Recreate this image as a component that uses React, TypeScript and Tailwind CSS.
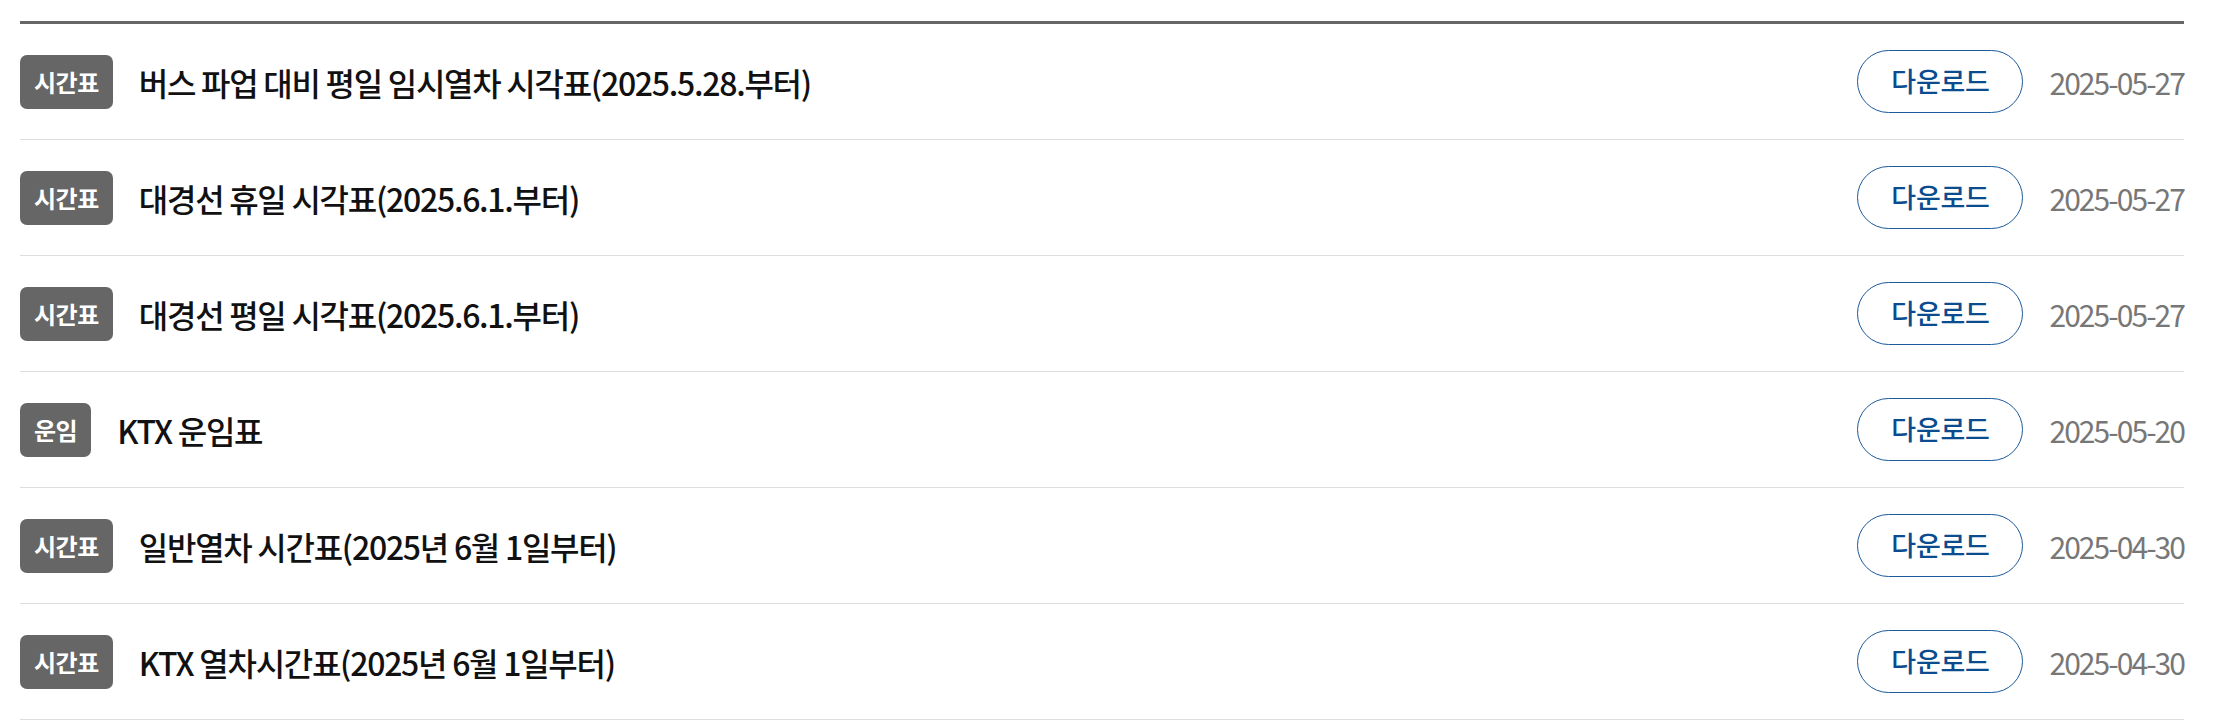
import React from "react";

type Item = { tag: string; title: string; date: string };

const items: Item[] = [
  { tag: "시간표", title: "버스 파업 대비 평일 임시열차 시각표(2025.5.28.부터)", date: "2025-05-27" },
  { tag: "시간표", title: "대경선 휴일 시각표(2025.6.1.부터)", date: "2025-05-27" },
  { tag: "시간표", title: "대경선 평일 시각표(2025.6.1.부터)", date: "2025-05-27" },
  { tag: "운임", title: "KTX 운임표", date: "2025-05-20" },
  { tag: "시간표", title: "일반열차 시간표(2025년 6월 1일부터)", date: "2025-04-30" },
  { tag: "시간표", title: "KTX 열차시간표(2025년 6월 1일부터)", date: "2025-04-30" },
];

export default function App() {
  return (
    <div
      className="w-[2230px] h-[727px] bg-white pt-[21px] pl-[20px]"
      style={{ fontFamily: '"Noto Sans CJK KR", "Noto Sans", sans-serif' }}
    >
      <ul className="w-[2164px] border-t-[3px] border-[#666666]">
        {items.map((it, i) => (
          <li
            key={i}
            className="flex items-center h-[116px] border-b border-[#dddddd]"
          >
            <span className="flex items-center justify-center h-[54px] px-[14px] rounded-[7px] bg-[#666666] text-white text-[24px] font-semibold tracking-[-0.02em] shrink-0">
              {it.tag}
            </span>
            <span className="ml-[26px] flex-1 text-[32px] font-medium text-[#111111] tracking-[-0.04em] leading-none">
              {it.title}
            </span>
            <button className="flex items-center justify-center w-[166px] h-[63px] rounded-full border border-[#1d5a9b] text-[#0b4c8f] text-[27px] font-medium tracking-[-0.01em] shrink-0">
              다운로드
            </button>
            <span className="ml-[26px] text-[30px] text-[#777777] tracking-[-0.065em] leading-none shrink-0">
              {it.date}
            </span>
          </li>
        ))}
      </ul>
    </div>
  );
}
